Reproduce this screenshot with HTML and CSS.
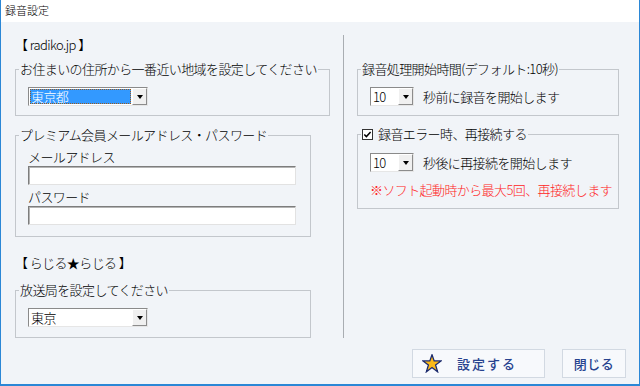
FILE: index.html
```html
<!DOCTYPE html>
<html lang="ja">
<head>
  <meta charset="UTF-8">
  <title>録音設定</title>
  <link rel="stylesheet" href="styles.css">
</head>
<body>
  <div class="window">
    <div class="titlebar">録音設定</div>

    <div class="main">
      <div class="col-left">
        <div class="section-label">【 radiko.jp 】</div>

        <fieldset class="group group-wide">
          <legend>お住まいの住所から一番近い地域を設定してください</legend>
          <div class="group-body">
            <div class="combo combo-area">
              <div class="combo-value focused">東京都</div>
              <div class="combo-btn"><i class="arrow"></i></div>
            </div>
          </div>
        </fieldset>

        <fieldset class="group group-narrow account">
          <legend>プレミアム会員メールアドレス・パスワード</legend>
          <div class="group-body">
            <div class="field-label">メールアドレス</div>
            <div class="textbox"></div>
            <div class="field-label second">パスワード</div>
            <div class="textbox"></div>
          </div>
        </fieldset>

        <div class="section-label radiru">【 らじる★らじる 】</div>

        <fieldset class="group group-narrow station">
          <legend>放送局を設定してください</legend>
          <div class="group-body">
            <div class="combo combo-area">
              <div class="combo-value">東京</div>
              <div class="combo-btn"><i class="arrow"></i></div>
            </div>
          </div>
        </fieldset>
      </div>

      <div class="divider"></div>

      <div class="col-right">
        <fieldset class="group">
          <legend>録音処理開始時間(デフォルト:10秒)</legend>
          <div class="group-body">
            <div class="row">
              <div class="combo combo-num">
                <div class="combo-value">10</div>
                <div class="combo-btn"><i class="arrow"></i></div>
              </div>
              <span>秒前に録音を開始します</span>
            </div>
          </div>
        </fieldset>

        <fieldset class="group retry">
          <legend>
            <svg class="checkbox" width="11" height="11" viewBox="0 0 11 11">
              <rect x="0.5" y="0.5" width="10" height="10" fill="#fff" stroke="#333"/>
              <path d="M2.3 5.4 L4.4 7.6 L8.6 2.9" fill="none" stroke="#000" stroke-width="1.5"/>
            </svg>録音エラー時、再接続する
          </legend>
          <div class="group-body">
            <div class="row">
              <div class="combo combo-num">
                <div class="combo-value">10</div>
                <div class="combo-btn"><i class="arrow"></i></div>
              </div>
              <span>秒後に再接続を開始します</span>
            </div>
            <div class="warning">※ソフト起動時から最大5回、再接続します</div>
          </div>
        </fieldset>
      </div>
    </div>

    <div class="footer">
      <button class="btn btn-save">
        <svg width="20" height="19" viewBox="0 0 20 19">
          <polygon points="10,0.8 12.2,6.9 19,6.9 13.6,10.9 15.6,17.8 10,13.6 4.4,17.8 6.4,10.9 1,6.9 7.8,6.9" fill="#fbb917" stroke="#1c2b6e" stroke-width="1.3"/>
        </svg>
        <span>設定する</span>
      </button>
      <button class="btn btn-close">閉じる</button>
    </div>
  </div>
</body>
</html>
```

FILE: styles.css
```css
body {
  margin: 0;
  font-family: "Noto Sans CJK JP", "Noto Sans", sans-serif;
  font-size: 13px;
  font-weight: 300;
  letter-spacing: -0.6px;
  color: #000;
}

.window {
  width: 640px;
  height: 386px;
  box-sizing: border-box;
  border: 1px solid #2b87d6;
  border-top: none;
  border-bottom-width: 2px;
  background-color: #f1f4f8;
  display: flex;
  flex-direction: column;
}

.titlebar {
  height: 22px;
  line-height: 21px;
  padding-left: 4px;
  background-color: #fff;
  font-size: 11px;
  letter-spacing: 0;
}

.main {
  display: flex;
  height: 316px;
  box-sizing: border-box;
  padding: 13px 0 0 14px;
}

.col-left {
  width: 315px;
}

.col-right {
  width: 262px;
  padding-top: 26px;
}

.divider {
  width: 1px;
  height: 303px;
  margin: 0 13px;
  background-color: #a9adb2;
}

.section-label {
  line-height: 16px;
  margin-top: 2px;
}

.section-label.radiru {
  margin-top: 18px;
}

/* group boxes */
.group {
  margin: 0;
  padding: 0;
  border: 1px solid #c3c7cc;
  min-width: 0;
}

.group legend {
  margin-left: 3px;
  padding: 0 1px;
  line-height: 16px;
}

.group-body {
  padding: 10px 12px 9px 12px;
}

.group-wide {
  margin-top: 8px;
}

.group-narrow {
  width: 296px;
  box-sizing: border-box;
}

.account {
  margin-top: 11px;
}

.account .group-body {
  padding: 6px 12px 11px 12px;
}

.station {
  margin-top: 11px;
}

.station .group-body {
  padding-bottom: 10px;
}

.retry {
  margin-top: 10px;
}

.retry .group-body {
  padding: 11px 12px 10px 12px;
}

.checkbox {
  vertical-align: -1px;
  margin-right: 5px;
}

.field-label {
  line-height: 16px;
}

.field-label.second {
  margin-top: 4px;
}

.textbox {
  width: 268px;
  height: 19px;
  margin-top: 1px;
  box-sizing: border-box;
  background-color: #fff;
  border: 1px solid;
  border-color: #7d7d7d #e2e2e2 #e2e2e2 #7d7d7d;
  box-shadow: inset 1px 1px 0 #b4b4b4;
}

/* combo boxes */
.combo {
  display: flex;
  height: 19px;
  box-sizing: border-box;
  background-color: #fff;
  border: 1px solid;
  border-color: #8a8a8a #e6e6e6 #e6e6e6 #8a8a8a;
}

.combo-area {
  width: 120px;
}

.combo-num {
  width: 44px;
}

.combo-value {
  flex: 1;
  line-height: 17px;
  padding-left: 2px;
  white-space: nowrap;
}

.combo-value.focused {
  margin: 1px;
  padding-left: 1px;
  background-color: #3399ff;
  color: #fff;
  line-height: 15px;
  outline: 1px dotted #9a5a1e;
  outline-offset: -1px;
}

.combo-btn {
  width: 15px;
  box-sizing: border-box;
  background-color: #f0f0f0;
  border: 1px solid;
  border-color: #fff #8c8c8c #8c8c8c #fff;
  display: flex;
  align-items: center;
  justify-content: center;
}

.arrow {
  width: 0;
  height: 0;
  border-left: 3px solid transparent;
  border-right: 3px solid transparent;
  border-top: 4px solid #000;
  margin-top: 1px;
}

.row {
  display: flex;
  align-items: center;
  gap: 9px;
  line-height: 16px;
}

.warning {
  margin-top: 10px;
  line-height: 16px;
  white-space: nowrap;
  color: #ff2424;
}

/* buttons */
.footer {
  display: flex;
  justify-content: flex-end;
  gap: 17px;
  padding: 11px 13px 0 0;
}

.btn {
  height: 29px;
  box-sizing: border-box;
  background-color: #f7f9fc;
  border: 1px solid #d2d9e2;
  color: #27438f;
  font-family: inherit;
  font-size: 13px;
  cursor: pointer;
  display: flex;
  align-items: center;
}

.btn-save {
  width: 133px;
  padding: 0 0 0 9px;
  gap: 15px;
  letter-spacing: 2px;
  font-weight: 500;
}

.btn-close {
  width: 64px;
  justify-content: center;
  letter-spacing: 0.5px;
  font-weight: 500;
}
```
